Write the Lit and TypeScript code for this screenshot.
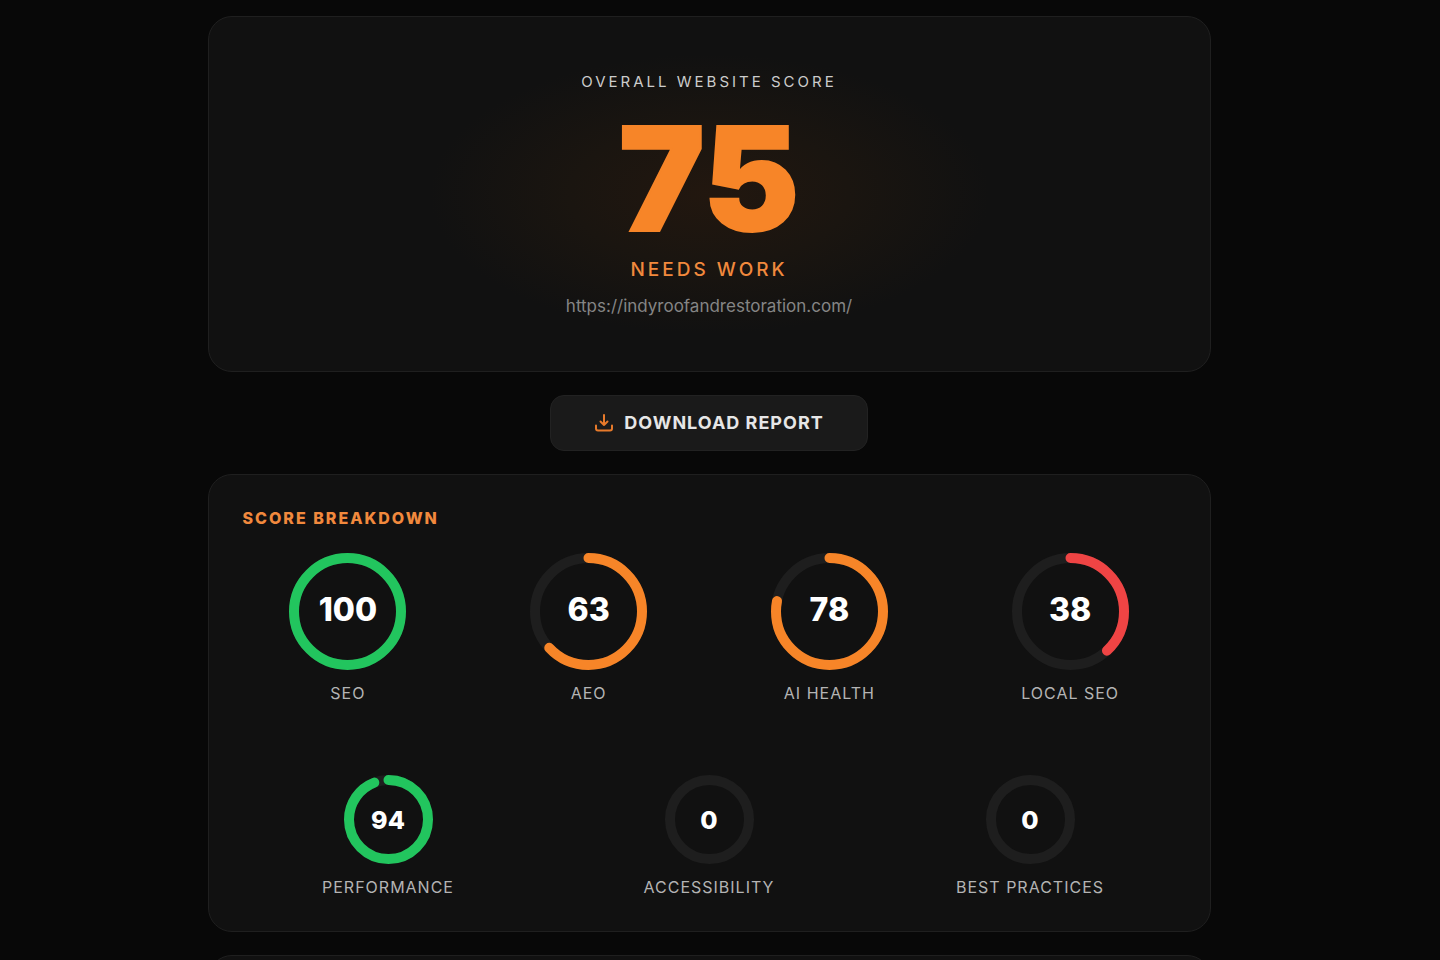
import { LitElement, html, css, svg, nothing } from "lit";
import { customElement, property } from "lit/decorators.js";

@customElement("score-ring")
class ScoreRing extends LitElement {
  @property({ type: Number }) value = 0;
  @property({ type: Number }) size = 117;
  @property() label = "";
  @property() tone = "good";

  static styles = css`
    :host { display: flex; flex-direction: column; align-items: center; gap: 12px; min-width: 0; }
    .dial { display: grid; place-items: center; }
    .dial > * { grid-area: 1 / 1; }
    svg { display: block; }
    circle { fill: none; stroke-width: 10; }
    .track { stroke: #1e1e1e; }
    .arc { stroke-linecap: round; }
    .good { stroke: #22c55e; }
    .fair { stroke: #f78528; }
    .poor { stroke: #ef4444; }
    .value { font-size: 32px; line-height: 36px; font-weight: 800; color: #fff; padding-bottom: 4px; }
    .small { font-size: 25px; line-height: 28px; padding-bottom: 0; }
    .label { font-size: 16px; line-height: 22px; letter-spacing: 1px; color: #b4b4b4; text-transform: uppercase; }
  `;

  render() {
    const c = this.size / 2;
    const r = c - 5;
    const length = 2 * Math.PI * r;
    const arc = this.value > 0
      ? svg`<circle class="arc ${this.tone}" cx=${c} cy=${c} r=${r}
          stroke-dasharray="${(length * this.value) / 100} ${length}" transform="rotate(-90 ${c} ${c})"></circle>`
      : nothing;
    return html`
      <div class="dial">
        <svg width=${this.size} height=${this.size} aria-hidden="true">
          <circle class="track" cx=${c} cy=${c} r=${r}></circle>
          ${arc}
        </svg>
        <span class="value ${this.size < 100 ? "small" : ""}">${this.value}</span>
      </div>
      <span class="label">${this.label}</span>
    `;
  }
}

const MAIN = [
  { label: "SEO", value: 100, tone: "good" },
  { label: "AEO", value: 63, tone: "fair" },
  { label: "AI Health", value: 78, tone: "fair" },
  { label: "Local SEO", value: 38, tone: "poor" },
];

const LIGHTHOUSE = [
  { label: "Performance", value: 94, tone: "good" },
  { label: "Accessibility", value: 0, tone: "poor" },
  { label: "Best Practices", value: 0, tone: "poor" },
];

@customElement("app-root")
class AppRoot extends LitElement {
  static styles = css`
    :host {
      display: block; box-sizing: border-box; height: 100vh; overflow: hidden;
      padding: 16px 46px 0 24px; background: #080808; color: #fff;
      font-family: Inter, "DejaVu Sans", sans-serif;
    }
    main { display: flex; flex-direction: column; align-items: center; gap: 23px; max-width: 1003px; margin: 0 auto; }
    section { box-sizing: border-box; width: 100%; flex: none; background: #111; border: 1px solid #1f1f1f; border-radius: 24px; }
    h1, h2, p { margin: 0; }
    .overall {
      display: flex; flex-direction: column; align-items: center; padding: 54px 24px 53px;
      background: radial-gradient(ellipse 280px 140px at center, #22170f, #1a1510 50%, #111 100%) #111;
    }
    .eyebrow { font-size: 15px; line-height: 22px; font-weight: 400; letter-spacing: 3px; color: #ccc; text-transform: uppercase; }
    .score { font-size: 144px; line-height: 142px; font-weight: 900; color: #f78528; -webkit-text-stroke: 2px #f78528; padding: 15px 0 8px; }
    .verdict { font-size: 19px; line-height: 24px; font-weight: 500; letter-spacing: 3px; color: #f1893d; text-transform: uppercase; }
    .url { font-size: 17px; line-height: 24px; color: #858585; text-decoration: none; padding-top: 12px; }
    .download {
      display: flex; align-items: center; gap: 10px; padding: 15px 43px; border: 1px solid #222; border-radius: 14px;
      background: #1a1a1a; color: #e6e6e6; font: inherit; font-size: 18px; line-height: 24px; font-weight: 700; letter-spacing: 1px;
      text-transform: uppercase;
    }
    .download svg { width: 20px; height: 20px; fill: none; stroke: #e77a2b; stroke-width: 2; stroke-linecap: round; stroke-linejoin: round; }
    .breakdown { padding: 31px 34px 33px; }
    h2 { font-size: 16px; line-height: 24px; font-weight: 800; letter-spacing: 2px; color: #f1893d; text-transform: uppercase; }
    .row { display: grid; gap: 30px; }
    .main { grid-template-columns: repeat(4, minmax(0, 1fr)); padding-top: 23px; }
    .audits { grid-template-columns: repeat(3, minmax(0, 1fr)); padding-top: 71px; }
    .next { height: 240px; }
  `;

  render() {
    return html`
      <main>
        <section class="overall">
          <h1 class="eyebrow">Overall Website Score</h1>
          <p class="score">75</p>
          <p class="verdict">Needs Work</p>
          <a class="url" href="https://indyroofandrestoration.com/">https://indyroofandrestoration.com/</a>
        </section>
        <button class="download" type="button">
          <svg viewBox="0 0 20 20" aria-hidden="true">
            <path d="M10 2v10M6.500 8.500l3.500 3.500 3.500-3.500M2 12.500v3a2 2 0 0 0 2 2h12a2 2 0 0 0 2-2v-3"></path>
          </svg>
          <span>Download Report</span>
        </button>
        <section class="breakdown">
          <h2>Score Breakdown</h2>
          <div class="row main">
            ${MAIN.map((s) => html`<score-ring .value=${s.value} .label=${s.label} .tone=${s.tone} .size=${117}></score-ring>`)}
          </div>
          <div class="row audits">
            ${LIGHTHOUSE.map((s) => html`<score-ring .value=${s.value} .label=${s.label} .tone=${s.tone} .size=${89}></score-ring>`)}
          </div>
        </section>
        <section class="next"></section>
      </main>
    `;
  }
}
